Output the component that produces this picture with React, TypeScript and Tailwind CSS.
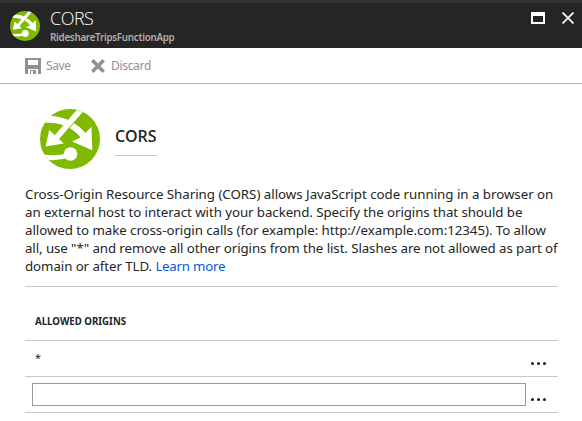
import React from "react";

function Logo({ className }: { className: string }) {
  return (
    <svg viewBox="0 0 60 60" className={className} aria-hidden="true">
      <defs>
        <clipPath id="disc"><circle cx="30" cy="30" r="30" /></clipPath>
      </defs>
      <g clipPath="url(#disc)">
        <rect width="60" height="60" fill="#7fba00" />
        <path d="M3 10.3C18 9.6 33 13 44.5 28" fill="none" stroke="#fff" strokeWidth="6.4" />
        <path d="M51.5 17.8L52.3 41.2L32 32.6L39.5 29L46.5 23Z" fill="#fff" />
        <path d="M42.3 -1L14 31.3" fill="none" stroke="#7fba00" strokeWidth="7.4" />
        <path d="M3 10.3C13 9.6 20 10.8 27 14L30.5 16" fill="none" stroke="#fff" strokeWidth="6.4" />
        <path d="M42.3 -1L14 31.3" fill="none" stroke="#fff" strokeWidth="5.8" />
        <path d="M9.2 21L5.6 37.5L23.8 34.4Z" fill="#fff" />
        <path d="M2 47.7C12 49.5 21 49 29 46" fill="none" stroke="#fff" strokeWidth="5" />
        <circle cx="30.5" cy="45" r="6.8" fill="#fff" />
      </g>
    </svg>
  );
}

function More() {
  return (
    <button aria-label="More" className="mt-[11px] mr-[12px] flex h-[3px] gap-[3px]">
      <i className="size-[3px] rounded-full bg-[#1a1a1a]" />
      <i className="size-[3px] rounded-full bg-[#1a1a1a]" />
      <i className="size-[3px] rounded-full bg-[#1a1a1a]" />
    </button>
  );
}

export default function App() {
  return (
    <div className="h-[421px] w-[582px] overflow-hidden bg-white font-['Noto_Sans','Open_Sans',sans-serif] text-[#252525]">
      <header className="flex h-[48px] border-t-[3px] border-[#333] bg-[#252525] pl-[10px] text-white">
        <Logo className="mt-[8px] size-[30px]" />
        <div className="ml-[10px] flex-1 whitespace-nowrap">
          <h1 className="mt-[4px] h-[21px] font-['Open_Sans'] text-[18px] leading-[22px] font-light tracking-[-0.5px]">CORS</h1>
          <p className="mt-[3px] text-[9.8px] leading-[13px] font-semibold tracking-[-0.27px] text-[#b0b0b0]">RideshareTripsFunctionApp</p>
        </div>
        <i className="mt-[9px] h-[12px] w-[14px] border-2 border-t-4 border-white" />
        <svg viewBox="0 0 12 12" className="mt-[9px] mr-[8px] ml-[17px] size-[12px]" stroke="#fff" strokeWidth="1.7">
          <path d="M.5.5L11.5 11.5M11.5.5L.5 11.5" />
        </svg>
      </header>
      <div className="flex h-[36px] border-b border-[#b5b5b5] pl-[25px] text-[12px] leading-[16px] text-[#919191]">
        <svg viewBox="0 0 16 16" className="mt-[10px] size-[16px]" fill="#919191">
          <path fillRule="evenodd" d="M0 0H16V16H13V11H3V16H1L0 15ZM3 2V7H13V2ZM5 12H11V16H8V13H6V16H5Z" />
        </svg>
        <span className="mt-[10px] ml-[5px] w-[25px] whitespace-nowrap tracking-[-0.35px]">Save</span>
        <svg viewBox="0 0 14 14" className="mt-[11px] ml-[20px] size-[14px]" stroke="#919191" strokeWidth="3.5">
          <path d="M1.3 1.3L12.7 12.7M12.7 1.3L1.3 12.7" />
        </svg>
        <span className="mt-[10px] ml-[6px] tracking-[-0.32px]">Discard</span>
      </div>
      <main className="px-[24px] pl-[25px]">
        <div className="flex h-[101px] pt-[25px] pl-[15px]">
          <Logo className="size-[60px]" />
          <h2 className="mt-[17px] ml-[15px] h-[30px] w-[42px] border-b border-[#c8c8c8] font-['Open_Sans'] text-[16px] leading-[20px] font-semibold tracking-[-0.1px]">CORS</h2>
        </div>
        <p className="h-[101px] text-[13.3px] leading-[18px] whitespace-nowrap">
          <span className="block tracking-[-0.02px]">Cross-Origin Resource Sharing (CORS) allows JavaScript code running in a browser on</span>
          <span className="block tracking-[-0.07px]">an external host to interact with your backend. Specify the origins that should be</span>
          <span className="block tracking-[-0.055px]">allowed to make cross-origin calls (for example: http://example.com:12345). To allow</span>
          <span className="block tracking-[-0.087px]">all, use "*" and remove all other origins from the list. Slashes are not allowed as part of</span>
          <span className="block tracking-[-0.08px]">domain or after TLD. <a className="tracking-[-0.24px] text-[#015cda]">Learn more</a></span>
        </p>
        <section className="border-t border-[#c8c8c8]">
          <h3 className="h-[53px] pt-[27px] pl-[10px] text-[9.7px] leading-[15px] font-bold">ALLOWED ORIGINS</h3>
          <div className="flex h-[36px] justify-between border-t border-[#c8c8c8] pl-[10px] text-[11px]">
            <span className="mt-[8px] leading-[18px]">*</span>
            <div className="pt-[10px]"><More /></div>
          </div>
          <div className="flex h-[37px] justify-between border-y border-[#c8c8c8] pl-[7px]">
            <input aria-label="Allowed origin" className="mt-[6px] h-[23px] w-[494px] border border-[#999] bg-white outline-none" />
            <div className="pt-[10px]"><More /></div>
          </div>
        </section>
      </main>
    </div>
  );
}
